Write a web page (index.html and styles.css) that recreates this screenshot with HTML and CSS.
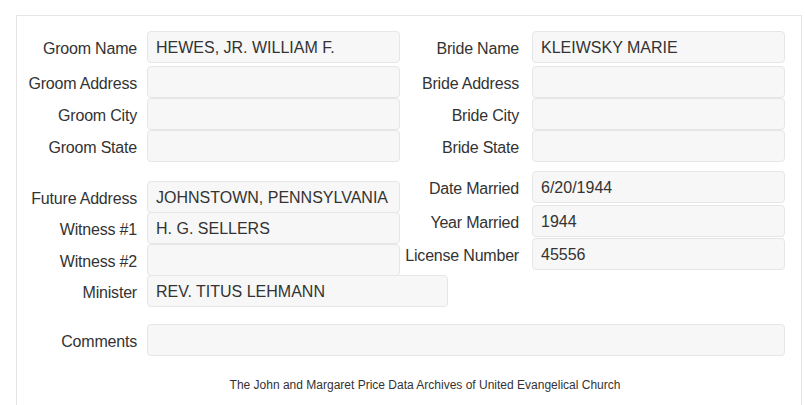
FILE: index.html
```html
<!DOCTYPE html>
<html>
<head>
  <meta charset="utf-8">
  <link rel="stylesheet" href="styles.css">
</head>
<body>
  <div class="panel">
    <div class="block">
      <div class="col left">
        <div class="row first">
          <label class="label">Groom Name</label>
          <div class="field">HEWES, JR. WILLIAM F.</div>
        </div>
        <div class="row">
          <label class="label">Groom Address</label>
          <div class="field"></div>
        </div>
        <div class="row">
          <label class="label">Groom City</label>
          <div class="field"></div>
        </div>
        <div class="row">
          <label class="label">Groom State</label>
          <div class="field"></div>
        </div>
      </div>
      <div class="col right">
        <div class="row first">
          <label class="label">Bride Name</label>
          <div class="field">KLEIWSKY MARIE</div>
        </div>
        <div class="row">
          <label class="label">Bride Address</label>
          <div class="field"></div>
        </div>
        <div class="row">
          <label class="label">Bride City</label>
          <div class="field"></div>
        </div>
        <div class="row">
          <label class="label">Bride State</label>
          <div class="field"></div>
        </div>
      </div>
    </div>

    <div class="block">
      <div class="col left lower">
        <div class="row tight">
          <label class="label">Future Address</label>
          <div class="field">JOHNSTOWN, PENNSYLVANIA</div>
        </div>
        <div class="row">
          <label class="label">Witness #1</label>
          <div class="field">H. G. SELLERS</div>
        </div>
        <div class="row tight">
          <label class="label">Witness #2</label>
          <div class="field"></div>
        </div>
        <div class="row">
          <label class="label">Minister</label>
          <div class="field wide">REV. TITUS LEHMANN</div>
        </div>
      </div>
      <div class="col right upper">
        <div class="row spaced">
          <label class="label">Date Married</label>
          <div class="field">6/20/1944</div>
        </div>
        <div class="row spaced">
          <label class="label">Year Married</label>
          <div class="field">1944</div>
        </div>
        <div class="row spaced">
          <label class="label">License Number</label>
          <div class="field">45556</div>
        </div>
      </div>
    </div>

    <div class="row comments">
      <label class="label">Comments</label>
      <div class="field full"></div>
    </div>

    <div class="footer">The John and Margaret Price Data Archives of United Evangelical Church</div>
  </div>
</body>
</html>
```

FILE: styles.css
```css
body {
  margin: 0;
  font-family: "Liberation Sans", Arial, sans-serif;
  font-size: 16px;
  color: #333;
  background-color: white;
}

.panel {
  margin: 15px 3px 0 16px;
  padding-top: 15px;
  height: 374px;
  border: 1px solid #e5e5e5;
  border-bottom: none;
}

.block {
  display: flex;
  align-items: flex-start;
}

.col {
  display: flex;
  flex-direction: column;
}

.col.left {
  width: 383px;
}

.col.right {
  width: 385px;
}

.col.lower {
  margin-top: 19px;
}

.col.upper {
  margin-top: 9px;
}

.row {
  display: flex;
  align-items: center;
  height: 32px;
}

.row.first {
  margin-bottom: 3px;
}

.row.tight {
  height: 31px;
}

.row.spaced {
  margin-bottom: 1.5px;
}

.label {
  flex: none;
  text-align: right;
  padding-top: 4px;
  letter-spacing: -0.2px;
}

.left .label,
.comments .label {
  width: 120px;
  margin-right: 10px;
}

.right .label {
  width: 119px;
  margin-right: 13px;
}

.field {
  flex: none;
  box-sizing: border-box;
  width: 253px;
  height: 32px;
  padding: 0 8px;
  line-height: 31px;
  background-color: #f7f7f7;
  border: 1px solid #e6e6e6;
  border-radius: 4px;
  white-space: nowrap;
}

.field.wide {
  width: 301px;
}

.field.full {
  width: 638px;
}

.comments {
  margin-top: 17px;
}

.footer {
  margin-top: 22px;
  padding-left: 32px;
  text-align: center;
  font-size: 12px;
}
```
